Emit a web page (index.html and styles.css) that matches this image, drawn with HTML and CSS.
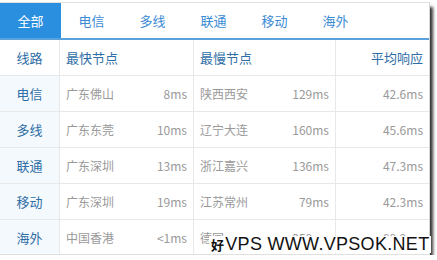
FILE: index.html
```html
<!DOCTYPE html>
<html lang="zh">
<head>
<meta charset="utf-8">
<link rel="stylesheet" href="styles.css">
</head>
<body>
<div class="panel">
  <div class="tabs">
    <div class="tab active">全部</div>
    <div class="tab">电信</div>
    <div class="tab">多线</div>
    <div class="tab">联通</div>
    <div class="tab">移动</div>
    <div class="tab">海外</div>
  </div>
  <div class="grid">
    <div class="row head">
      <div class="c1">线路</div>
      <div class="c2">最快节点</div>
      <div class="c3">最慢节点</div>
      <div class="c4">平均响应</div>
    </div>
    <div class="row">
      <div class="c1">电信</div>
      <div class="c2"><span>广东佛山</span><span>8ms</span></div>
      <div class="c3"><span>陕西西安</span><span>129ms</span></div>
      <div class="c4">42.6ms</div>
    </div>
    <div class="row">
      <div class="c1">多线</div>
      <div class="c2"><span>广东东莞</span><span>10ms</span></div>
      <div class="c3"><span>辽宁大连</span><span>160ms</span></div>
      <div class="c4">45.6ms</div>
    </div>
    <div class="row">
      <div class="c1">联通</div>
      <div class="c2"><span>广东深圳</span><span>13ms</span></div>
      <div class="c3"><span>浙江嘉兴</span><span>136ms</span></div>
      <div class="c4">47.3ms</div>
    </div>
    <div class="row">
      <div class="c1">移动</div>
      <div class="c2"><span>广东深圳</span><span>19ms</span></div>
      <div class="c3"><span>江苏常州</span><span>79ms</span></div>
      <div class="c4">42.3ms</div>
    </div>
    <div class="row last">
      <div class="c1">海外</div>
      <div class="c2"><span>中国香港</span><span>&lt;1ms</span></div>
      <div class="c3"><span>德国</span><span>258ms</span></div>
      <div class="c4">88.9ms</div>
    </div>
  </div>
  <div class="watermark"><span class="hao">好</span>VPS WWW.VPSOK.NET</div>
</div>
</body>
</html>
```
FILE: styles.css
```css
html, body {
  margin: 0;
  padding: 0;
  background: #fff;
}
body {
  padding-top: 2px;
  font-family: "Noto Sans CJK SC", "Noto Sans", sans-serif;
}
.panel {
  position: relative;
  width: 429px;
  border-top: 1px solid #e0e0e0;
  border-right: 1px solid #d6d6d6;
  border-bottom: 1px solid #e0e0e0;
  box-shadow: 3px 5px 3px rgba(0, 0, 0, 0.8);
}
.tabs {
  display: flex;
  height: 35px;
  border-bottom: 2px solid #5aa2dd;
}
.tab {
  width: 61px;
  text-align: center;
  line-height: 35px;
  font-size: 13px;
  color: #3b8bd4;
}
.tab.active {
  background: #2b8fdf;
  color: #fff;
}
.row {
  display: grid;
  grid-template-columns: 60px 134px 142px 93px;
  height: 35px;
  border-bottom: 1px solid #e8e8e8;
  font-size: 12px;
  color: #9a9a9a;
}
.row.head {
  height: 35px;
  font-size: 13px;
  color: #2f6ea6;
}
.row.last {
  border-bottom: none;
  height: 34px;
}
.row > div {
  display: flex;
  align-items: center;
  justify-content: space-between;
  padding: 0 6px;
  border-right: 1px solid #e8e8e8;
}
.row > .c4 {
  border-right: none;
  justify-content: flex-end;
}
.row > .c1 {
  justify-content: center;
  background: #f4f9fd;
  color: #2f6ea6;
  font-size: 13px;
  padding: 0;
}
.row.head > .c1 {
  background: #fff;
}
.watermark {
  position: absolute;
  left: 209px;
  top: 233px;
  padding: 0 2px;
  white-space: nowrap;
  font-family: "Liberation Sans", sans-serif;
  font-size: 18px;
  line-height: 17px;
  letter-spacing: 0.3px;
  color: #111;
  background: #fff;
}
.watermark .hao {
  font-family: "Noto Sans CJK SC", sans-serif;
  font-size: 13px;
  font-weight: bold;
  margin-right: 1px;
}
```
